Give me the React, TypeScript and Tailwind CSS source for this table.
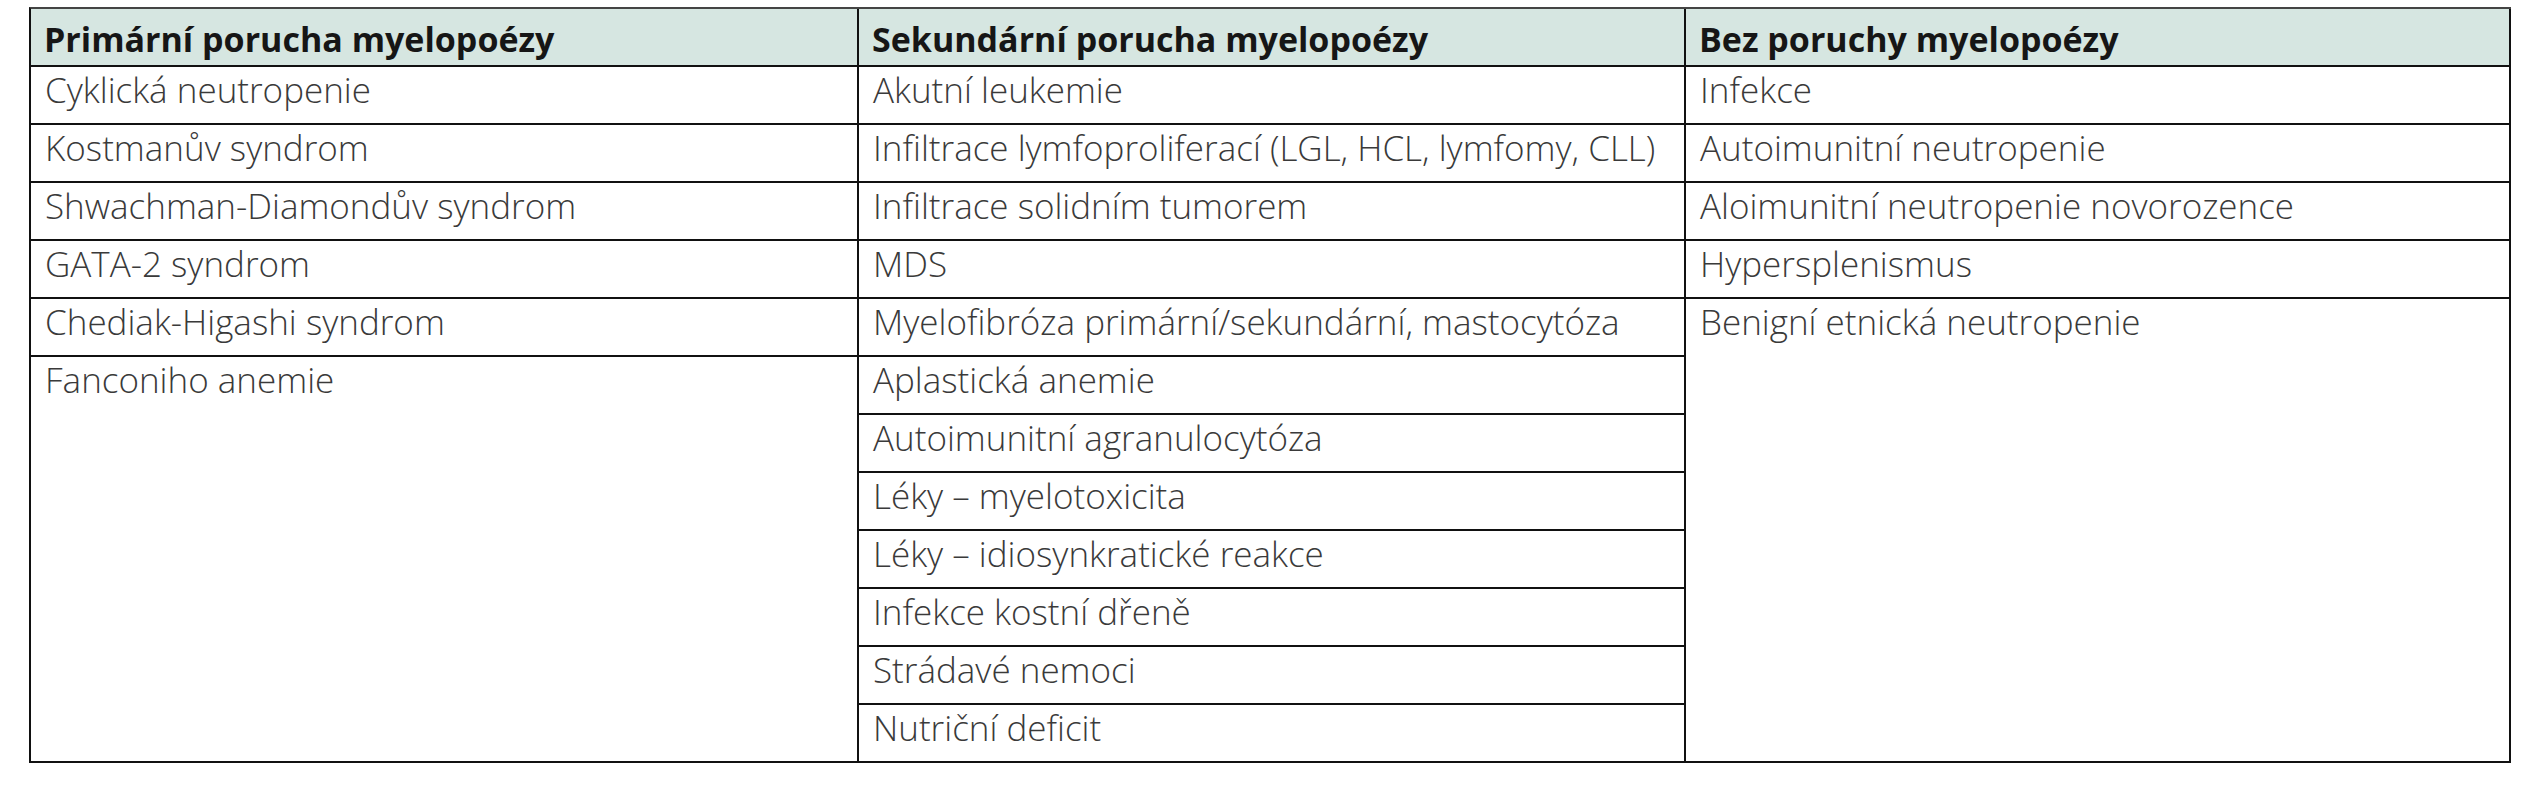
const primary = [
  "Cyklická neutropenie",
  "Kostmanův syndrom",
  "Shwachman-Diamondův syndrom",
  "GATA-2 syndrom",
  "Chediak-Higashi syndrom",
];

const secondary = [
  "Akutní leukemie",
  "Infiltrace lymfoproliferací (LGL, HCL, lymfomy, CLL)",
  "Infiltrace solidním tumorem",
  "MDS",
  "Myelofibróza primární/sekundární, mastocytóza",
  "Aplastická anemie",
  "Autoimunitní agranulocytóza",
  "Léky – myelotoxicita",
  "Léky – idiosynkratické reakce",
  "Infekce kostní dřeně",
  "Strádavé nemoci",
  "Nutriční deficit",
];

const none = [
  "Infekce",
  "Autoimunitní neutropenie",
  "Aloimunitní neutropenie novorozence",
  "Hypersplenismus",
];

function Head({ children }: { children: React.ReactNode }) {
  return (
    <div className="border-r-2 border-b-2 border-[#111] bg-[#d6e6e1] px-[13px] pt-[10px] text-[34px] leading-[40px] font-bold text-[#161616]">
      {children}
    </div>
  );
}

function Cell({ children, span = "" }: { children: React.ReactNode; span?: string }) {
  return (
    <div className={`border-r-2 border-b-2 border-[#111] px-[14px] pt-[3px] text-[35px] leading-[40px] font-light text-[#3a3a3a] ${span}`}>
      {children}
    </div>
  );
}

export default function App() {
  return (
    <div className="min-h-[800px] w-[2534px] bg-white pt-[7px] font-['Open_Sans',sans-serif]">
      <div className="ml-[29px] grid w-[2482px] grid-flow-col grid-cols-[828px_827px_825px] grid-rows-[repeat(13,58px)] border-l-2 border-t-2 border-l-[#111] border-t-[#444] whitespace-nowrap">
        {/* column 1 */}
        <Head>Primární porucha myelopoézy</Head>
        {primary.map((t) => (
          <Cell key={t}>{t}</Cell>
        ))}
        <Cell span="row-span-7">Fanconiho anemie</Cell>

        {/* column 2 */}
        <Head>Sekundární porucha myelopoézy</Head>
        {secondary.map((t) => (
          <Cell key={t}>{t}</Cell>
        ))}

        {/* column 3 */}
        <Head>Bez poruchy myelopoézy</Head>
        {none.map((t) => (
          <Cell key={t}>{t}</Cell>
        ))}
        <Cell span="row-span-8">Benigní etnická neutropenie</Cell>
      </div>
    </div>
  );
}
